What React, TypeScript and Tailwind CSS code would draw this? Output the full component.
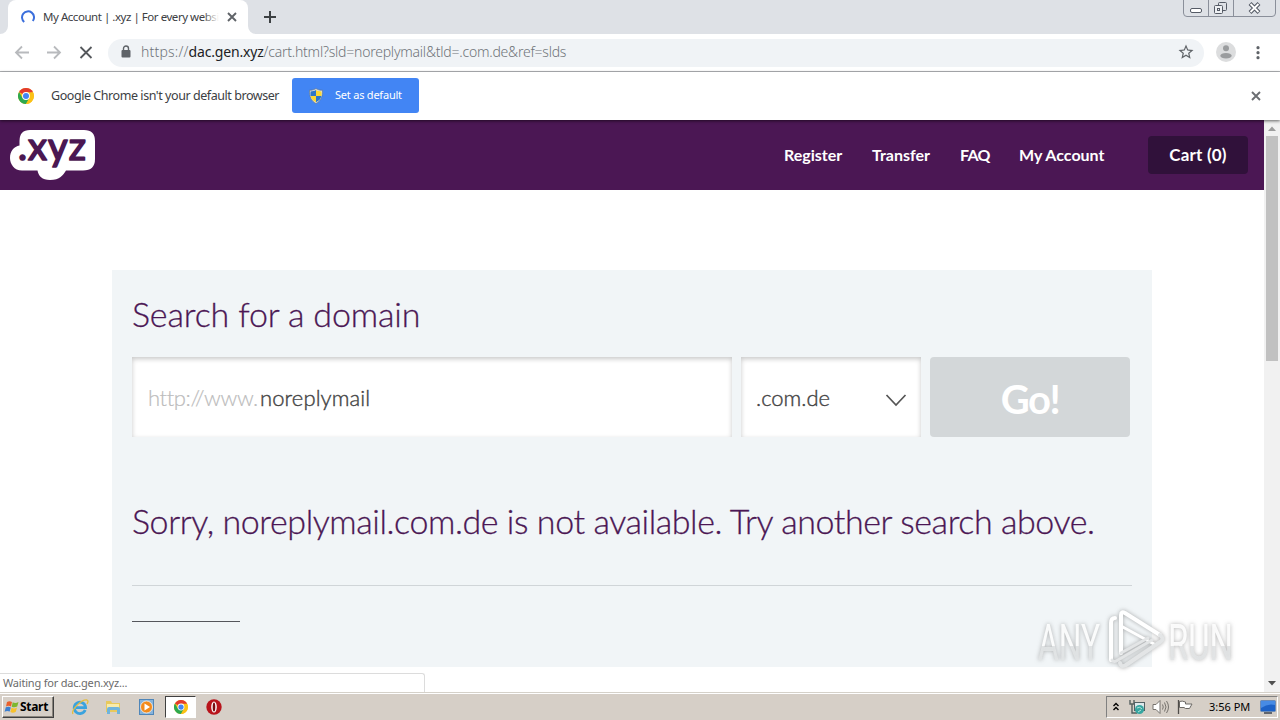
import type { ReactNode } from "react";
import { clsx } from "clsx";

const ui = "font-['Noto_Sans','Open_Sans',sans-serif]";
const brand = "font-['Lato',sans-serif]";

function ChromeLogo({ className }: { className?: string }) {
  return (
    <svg viewBox="0 0 16 16" className={className}>
      <circle cx="8" cy="8" r="8" fill="#fbc116" />
      <path d="M8 8 L1.07 4 A8 8 0 0 1 14.93 4 Z" fill="#e33b2e" />
      <path d="M1.07 4 A8 8 0 0 0 8 16 L11.5 10 L8 8 L4.5 10 Z" fill="#2da94f" />
      <path d="M8 4.2 H14.9 A8 8 0 0 1 8 16 L11.4 10 Z" fill="#fbc116" />
      <circle cx="8" cy="8" r="3.9" fill="#fff" />
      <circle cx="8" cy="8" r="3" fill="#4285f4" />
    </svg>
  );
}

function Shield() {
  return (
    <svg viewBox="0 0 16 16" className="h-4 w-4">
      <path d="M8 .5 C10 2 12.500 2.300 14.500 2.200 C14.800 8 13 13 8 15.500 C3 13 1.200 8 1.500 2.200 C3.500 2.300 6 2 8 .5Z" fill="#d9dde0" stroke="#5d7080" strokeWidth=".6" />
      <path d="M8 2 V8 H2.600 C2.400 6.400 2.400 4.800 2.600 3.400 C4.600 3.400 6.500 3 8 2Z" fill="#2d76c9" />
      <path d="M8 2 V8 H13.400 C13.600 6.400 13.600 4.800 13.400 3.400 C11.400 3.400 9.500 3 8 2Z" fill="#fbd835" />
      <path d="M8 14.200 V8 H2.600 C3.200 10.800 5 13 8 14.200Z" fill="#fbd835" />
      <path d="M8 14.200 V8 H13.400 C12.800 10.800 11 13 8 14.200Z" fill="#2d76c9" />
    </svg>
  );
}

function Cross({ className }: { className?: string }) {
  return (
    <svg viewBox="0 0 10 10" className={className} stroke="currentColor" strokeWidth="1.9" fill="none">
      <path d="M1 1 L9 9 M9 1 L1 9" />
    </svg>
  );
}

function TabStrip() {
  return (
    <div className="flex h-[34px] shrink-0 items-start bg-[#dee1e6]">
      <svg viewBox="0 0 8 34" className="h-[34px] w-2">
        <path d="M8 26 A8 8 0 0 1 0 34 H8Z" fill="#fff" />
      </svg>
      <div className="flex h-[34px] w-60 items-center rounded-t-lg bg-white pl-[13px]">
        <svg viewBox="0 0 14 14" className="h-[14px] w-[14px]">
          <path d="M3.200 12 A6 6 0 1 1 11.800 11" fill="none" stroke="#3b6fdc" strokeWidth="2" />
        </svg>
        <div className={clsx(ui, "relative ml-[8px] w-[176px] overflow-hidden text-[11.500px] leading-4 tracking-[-0.46px] whitespace-nowrap text-[#3c4043]")}>
          My Account | .xyz | For every websi
          <div className="absolute inset-y-0 right-0 w-4 bg-linear-to-r from-white/0 to-white" />
        </div>
        <Cross className="ml-[8px] h-[10px] w-[10px] text-[#5f6368]" />
      </div>
      <svg viewBox="0 0 8 34" className="h-[34px] w-2">
        <path d="M0 26 A8 8 0 0 0 8 34 H0Z" fill="#fff" />
      </svg>
      <svg viewBox="0 0 12 12" className="mt-[11px] ml-[8px] h-3 w-3">
        <path d="M6 0 V12 M0 6 H12" stroke="#3c4043" strokeWidth="2" />
      </svg>
      <svg viewBox="0 0 94 18" className="mr-[3px] ml-auto h-[18px] w-[94px]" fill="none" stroke="#8a8f9a">
        <path d="M.5 0 V13 Q.5 16.500 4 16.500 H89 Q92.500 16.500 92.500 13 V0 M25.500 0 V16 M50.500 0 V16" />
        <rect x="7.500" y="8.500" width="11" height="4" rx="1.500" stroke="#555b66" fill="#fff" />
        <rect x="35.500" y="2.500" width="8" height="8" rx="1" stroke="#555b66" />
        <rect x="31.500" y="5.500" width="8" height="8" rx="1" stroke="#555b66" fill="#eef0f3" />
        <rect x="34.500" y="8.500" width="2" height="2" stroke="#555b66" />
        <path d="M67 3.500 L76 12.500 M76 3.500 L67 12.500" stroke="#555b66" strokeWidth="4" />
        <path d="M67.500 4 L75.500 12 M75.500 4 L67.500 12" stroke="#fff" strokeWidth="1.800" />
      </svg>
    </div>
  );
}

function Toolbar() {
  return (
    <div className="flex h-[38px] shrink-0 items-center border-b border-[#b4b6b9] bg-white">
      <svg viewBox="0 0 80 16" className="ml-[14px] h-4 w-20" fill="none" strokeWidth="1.800">
        <path d="M15 7.500 H2 M8 1.500 L2 7.500 L8 13.500" stroke="#b8babd" />
        <path d="M33 7.500 H46 M40 1.500 L46 7.500 L40 13.500" stroke="#b8babd" />
        <path d="M66.500 2 L77.500 13 M77.500 2 L66.500 13" stroke="#55585c" />
      </svg>
      <div className="ml-[14px] flex h-7 w-[1096px] items-center rounded-full bg-[#f0f3f6] pl-[13px]">
        <svg viewBox="0 0 10 13" className="-mt-0.5 h-[13px] w-[10px]">
          <rect x=".5" y="5" width="9" height="7.500" rx="1" fill="#5f6368" />
          <path d="M2.500 6 V3.500 A2.500 2.500 0 0 1 7.500 3.500 V6" fill="none" stroke="#5f6368" strokeWidth="1.400" />
        </svg>
        <div className={clsx(ui, "-mt-px ml-[10px] text-sm leading-5 font-light tracking-[-0.15px] whitespace-nowrap text-[#6f7479]")}>
          <span className="tracking-[0.2px]">https://</span>
          <span className="font-normal tracking-[-0.18px] text-[#202124]">dac.gen.xyz</span>
          <span className="tracking-[-0.22px]">/cart.html?sld=noreplymail&amp;tld=.com.de&amp;ref=slds</span>
        </div>
        <svg viewBox="0 0 24 24" className="-mt-0.5 mr-[9px] ml-auto h-[18px] w-[18px]" fill="#5f6368">
          <path d="M22 9.240l-7.190-.62L12 2 9.190 8.630 2 9.240l5.460 4.730L5.820 21 12 17.270 18.180 21l-1.630-7.030L22 9.240zM12 15.400l-3.760 2.270 1-4.280-3.320-2.880 4.380-.38L12 6.100l1.710 4.040 4.380.38-3.320 2.880 1 4.280L12 15.400z" />
        </svg>
      </div>
      <svg viewBox="0 0 20 20" className="-mt-0.5 ml-[12px] h-5 w-5">
        <circle cx="10" cy="10" r="10" fill="#dcddde" />
        <circle cx="10" cy="6.300" r="3" fill="#9a9c9e" />
        <ellipse cx="10" cy="13.800" rx="5.700" ry="2.800" fill="#9a9c9e" />
      </svg>
      <svg viewBox="0 0 4 14" className="ml-[20px] h-[14px] w-1" fill="#5f6368">
        <circle cx="2" cy="1.700" r="1.600" />
        <circle cx="2" cy="6.700" r="1.600" />
        <circle cx="2" cy="11.700" r="1.600" />
      </svg>
    </div>
  );
}

function InfoBar() {
  return (
    <div className={clsx(ui, "relative z-10 flex h-12 shrink-0 items-center bg-white pb-px pl-[18px] shadow-[0_1px_3px_rgba(0,0,0,0.6)]")}>
      <ChromeLogo className="h-4 w-4" />
      <div className="mt-0.5 ml-[17px] w-[241px] text-[12.500px] tracking-[-0.44px] whitespace-nowrap text-[#3c4043]">
        Google Chrome isn't your default browser
      </div>
      <button type="button" className="flex h-[35px] w-[127px] items-center rounded-[3px] bg-[#4285f4] pl-4 text-[11px] text-white">
        <Shield />
        <span className="ml-[11px] tracking-[-0.22px] whitespace-nowrap">Set as default</span>
      </button>
      <Cross className="mr-[19px] ml-auto h-[10px] w-[10px] text-[#6b6e72]" />
    </div>
  );
}

function XyzLogo() {
  return (
    <svg viewBox="0 0 86 52" className="h-[52px] w-[86px] overflow-visible">
      <path d="M20 1 H74 Q85 1 85 12 V30 Q85 41.500 73 41.500 H56 C53 46 50 51 40 51 C32 51 28.500 47 27.500 41.500 H12 C4 41.500 0 35 0 29 C0 22 4 17.500 9.500 16.500 V12 Q9.500 1 20 1Z" fill="#fff" />
      <text x="8" y="31" textLength="68" lengthAdjust="spacing" fill="#4b1752" stroke="#4b1752" strokeWidth="1.700" strokeLinejoin="round" className="font-['Lato',sans-serif] text-[38px] font-normal">
        .xyz
      </text>
    </svg>
  );
}

function SiteHeader() {
  return (
    <header className={clsx(brand, "flex h-[70px] items-center bg-[#4b1754] pl-[10px] text-base font-bold text-white")}>
      <XyzLogo />
      <nav className="ml-auto flex">
        <a className="w-[87px]">Register</a>
        <a className="w-[89px] pl-px">Transfer</a>
        <a className="w-[59px] tracking-[-0.7px]">FAQ</a>
        <a className="w-[129px]">My Account</a>
      </nav>
      <a className="mr-4 flex h-[38px] w-[100px] items-center justify-center rounded-[4px] bg-[#30113a] text-[17px] tracking-[0.2px]">Cart (0)</a>
    </header>
  );
}

function Field({ className, children }: { className?: string; children: ReactNode }) {
  return (
    <div className={clsx("flex h-20 items-center bg-white text-[22px] shadow-[inset_0_2px_5px_rgba(0,0,0,0.22)]", className)}>
      {children}
    </div>
  );
}

function SearchPanel() {
  return (
    <main className={clsx(brand, "mx-[112px] mt-20 h-[397px] bg-[#f1f5f7] px-5 pt-[23px]")}>
      <h1 className="h-16 text-[34px] leading-[42px] font-light tracking-[-0.15px] whitespace-nowrap text-[#4b1754] [-webkit-text-stroke:0.3px]">
        Search for a domain
      </h1>
      <div className="flex">
        <Field className="w-[600px] pl-4">
          <span className="w-[112px] font-light tracking-[-0.4px] whitespace-nowrap text-[#bcbcbc] [-webkit-text-stroke:0.2px]">http://www.</span>
          <span className="font-light tracking-[0.1px] text-[#444] [-webkit-text-stroke:0.4px]">noreplymail</span>
        </Field>
        <Field className="ml-[9px] w-[180px] pl-[15px]">
          <span className="font-light text-[#444] [-webkit-text-stroke:0.4px]">.com.de</span>
          <svg viewBox="0 0 22 14" className="mt-1.5 mr-[14px] ml-auto h-[14px] w-[22px]" fill="none" stroke="#555" strokeWidth="1.700">
            <path d="M1.500 2 L11 12 L20.500 2" />
          </svg>
        </Field>
        <button type="button" className="ml-[9px] h-20 w-[200px] rounded-[4px] bg-[#d3d7d9] pt-1 text-[40px] font-bold tracking-[-1.500px] text-white">Go!</button>
      </div>
      <h2 className="mt-[63px] h-[85px] text-[34px] leading-[42px] font-light tracking-[-0.42px] whitespace-nowrap text-[#4b1754] [-webkit-text-stroke:0.3px]">
        Sorry, noreplymail.com.de is not available. Try another search above.
      </h2>
      <div className="h-9 border-t border-[#d0d5d8]" />
      <div className="h-px w-[108px] bg-[#55565c]" />
    </main>
  );
}

function Scrollbar() {
  return (
    <div className="flex w-4 flex-col items-center bg-[#f1f1f1]">
      <svg viewBox="0 0 16 16" className="h-4 w-4">
        <path d="M4 11 L8 6.500 L12 11Z" fill="#9c9c9c" />
      </svg>
      <div className="h-[225px] w-3 bg-[#c1c1c1]" />
      <svg viewBox="0 0 16 16" className="mt-auto h-4 w-4">
        <path d="M4 5 L8 9.500 L12 5Z" fill="#505050" />
      </svg>
    </div>
  );
}

function Watermark() {
  return (
    <svg viewBox="0 0 210 70" className="absolute top-[485px] left-[1030px] h-[70px] w-[210px] overflow-visible drop-shadow-[0_0_2px_rgba(90,90,90,0.5)]">
      <defs>
        <linearGradient id="mark" x1="0" y1="0" x2="0" y2="1">
          <stop offset=".56" stopColor="#fff" />
          <stop offset=".56" stopColor="#e3e5e6" />
        </linearGradient>
      </defs>
      <g className="font-['Roboto',sans-serif] text-[50px] font-normal" fill="url(#mark)" opacity=".9">
        <text x="8" y="55" textLength="62" lengthAdjust="spacingAndGlyphs">ANY</text>
        <text x="138" y="55" textLength="65" lengthAdjust="spacingAndGlyphs">RUN</text>
      </g>
      <g fill="none" strokeLinejoin="round" strokeLinecap="round">
        <path d="M81 55 V18 Q81 13 85 13" stroke="#fff" strokeWidth="4" />
        <path d="M91 48 V10 Q91 6 95 8 L130 30" stroke="#fff" strokeWidth="4" />
        <path d="M91 21 L124 39" stroke="#fff" strokeWidth="3" />
        <path d="M130 30 Q135 34 130 37 L96 60 Q91 63 90 58" stroke="#e3e5e6" strokeWidth="4" />
        <path d="M91 48 L118 33 M82 55 Q84 58 88 55 L122 35" stroke="#e3e5e6" strokeWidth="3" />
      </g>
    </svg>
  );
}

function Taskbar() {
  return (
    <footer className={clsx(ui, "flex h-7 shrink-0 items-center border-t border-[#d5d1c9] bg-[#d6cfc7] pl-0.5 text-black shadow-[inset_0_1px_0_#fff]")}>
      <button type="button" className="flex h-[22px] w-[52px] items-center border border-t-white border-r-[#404040] border-b-[#404040] border-l-white pl-px text-[12px] font-bold shadow-[inset_-1px_-1px_0_#8a857d]">
        <svg viewBox="0 0 16 16" className="h-4 w-4">
          <path d="M3 3 Q5.500 1.500 8 3 L7 7.500 Q4.500 6.200 2 7.500Z" fill="#e9602c" />
          <path d="M8.700 3.300 Q11.500 4.700 14.500 3 L13.200 7.500 Q10.500 9 7.700 7.800Z" fill="#7db72f" />
          <path d="M1.800 8.300 Q4.500 7 6.800 8.400 L5.700 12.600 Q3.200 11.300 .6 12.800Z" fill="#3c7fd0" />
          <path d="M7.500 8.700 Q10.400 10.200 13 8.500 L11.800 12.800 Q9 14.400 6.400 13Z" fill="#f8c12b" />
        </svg>
        <span className="tracking-[-0.3px]">Start</span>
      </button>
      <svg viewBox="0 0 18 18" className="ml-[17px] h-[18px] w-[18px]" fill="none">
        <path d="M14.200 12 A5.700 5.700 0 1 1 14.600 9.600 H5" stroke="#3ba3de" strokeWidth="2.800" />
        <path d="M2 16 C-.5 12 11 1 16 2 C17.500 2.500 17 4.500 16 6" stroke="#e5bd3d" strokeWidth="1.300" />
      </svg>
      <svg viewBox="0 0 18 18" className="ml-[15px] h-[18px] w-[18px]">
        <path d="M2 3 H7 L8 5 H16 V14 H2Z" fill="#e8c95c" />
        <path d="M3 6 H15 V12 H3Z" fill="#f8ebaa" />
        <path d="M3 16 V11 Q3 9 5 9 H14 Q16 9 16 11 V16 H13 V12 H6 V16Z" fill="#6fb4dc" />
      </svg>
      <svg viewBox="0 0 18 18" className="ml-4 h-[18px] w-[18px]">
        <rect x="1.500" y="1.500" width="14" height="15" fill="#87b4dc" stroke="#4f86b9" />
        <circle cx="8.500" cy="9" r="6" fill="#f28b1d" stroke="#fff" strokeWidth=".7" />
        <path d="M6.500 5.500 L12 9 L6.500 12.500Z" fill="#fff" />
      </svg>
      <div className="ml-[9px] flex h-[22px] w-[31px] items-center justify-center border border-t-[#404040] border-r-white border-b-white border-l-[#404040] bg-white">
        <ChromeLogo className="h-[14px] w-[14px]" />
      </div>
      <svg viewBox="0 0 16 16" className="ml-[10px] h-4 w-4">
        <circle cx="8" cy="8" r="7.700" fill="#b8141b" />
        <ellipse cx="8" cy="8" rx="2.800" ry="5.500" fill="#fff" />
        <ellipse cx="8" cy="8" rx="1.300" ry="4.600" fill="#7a0c10" />
      </svg>
      <div className="mr-0.5 ml-auto flex h-[22px] w-[172px] items-center border border-t-[#808080] border-r-white border-b-white border-l-[#808080] pl-1">
        <svg viewBox="0 0 10 12" className="h-3 w-[10px]" fill="none" stroke="#000" strokeWidth="1.400">
          <path d="M2.500 5 L5 2.500 L7.500 5 M2.500 9 L5 6.500 L7.500 9" />
        </svg>
        <svg viewBox="0 0 18 16" className="ml-[7px] h-4 w-[18px]">
          <path d="M2 1 V5 H6 V1 M4 5 V14 H9" fill="none" stroke="#55605f" strokeWidth="1.400" />
          <rect x="6.500" y="3.500" width="10" height="8" fill="#dce9ec" stroke="#526064" />
          <circle cx="11.500" cy="10.500" r="4.500" fill="#36a6a1" />
          <path d="M9 9 Q12 7 14 10 M10 13 L13 11" stroke="#b6e4d9" fill="none" />
        </svg>
        <svg viewBox="0 0 18 16" className="ml-[6px] h-4 w-[18px]" fill="none" stroke="#77736e">
          <path d="M1 5.500 H4 L8 1.500 V14.500 L4 10.500 H1Z" fill="#fff" />
          <path d="M10.500 5.500 Q12 8 10.500 10.500 M12.500 3.500 Q15.500 8 12.500 12.500 M14.500 2 Q18.500 8 14.500 14" />
        </svg>
        <svg viewBox="0 0 18 16" className="ml-[6px] h-4 w-[18px]">
          <path d="M3.500 2.500 Q6 1.500 9.500 3 V5 H16 L13.500 9.500 H9.500 L8 8.500 H3.500Z" fill="#fff" stroke="#6d6a66" />
          <path d="M2.500 1 V15" stroke="#4f4c49" strokeWidth="1.300" />
        </svg>
        <span className="ml-[15px] pt-0.5 text-[11px] whitespace-nowrap">3:56 PM</span>
        <svg viewBox="0 0 16 14" className="mr-px ml-auto h-[14px] w-4">
          <rect x=".5" y=".5" width="15" height="11" rx="1" fill="#1d62c7" stroke="#6c8bb5" />
          <path d="M1 8 Q8 3 15 5 V1 H1Z" fill="#478be4" />
          <path d="M4 13 H12" stroke="#3b4350" strokeWidth="1.500" />
        </svg>
      </div>
    </footer>
  );
}

export default function App() {
  return (
    <div className="flex h-[720px] w-[1280px] flex-col overflow-hidden bg-white">
      <TabStrip />
      <Toolbar />
      <InfoBar />
      <div className="relative flex h-[572px] shrink-0">
        <div className="w-[1264px]">
          <SiteHeader />
          <SearchPanel />
        </div>
        <Scrollbar />
        <Watermark />
        {/* Link status bubble */}
        <div className={clsx(ui, "absolute bottom-0 left-0 h-[19px] w-[425px] rounded-tr-[3px] border-t border-r border-[#dcdcdc] bg-white pl-[3px] text-[11px] leading-[18px] tracking-[-0.2px] text-[#6b6b6b]")}>
          Waiting for dac.gen.xyz...
        </div>
      </div>
      <Taskbar />
    </div>
  );
}
